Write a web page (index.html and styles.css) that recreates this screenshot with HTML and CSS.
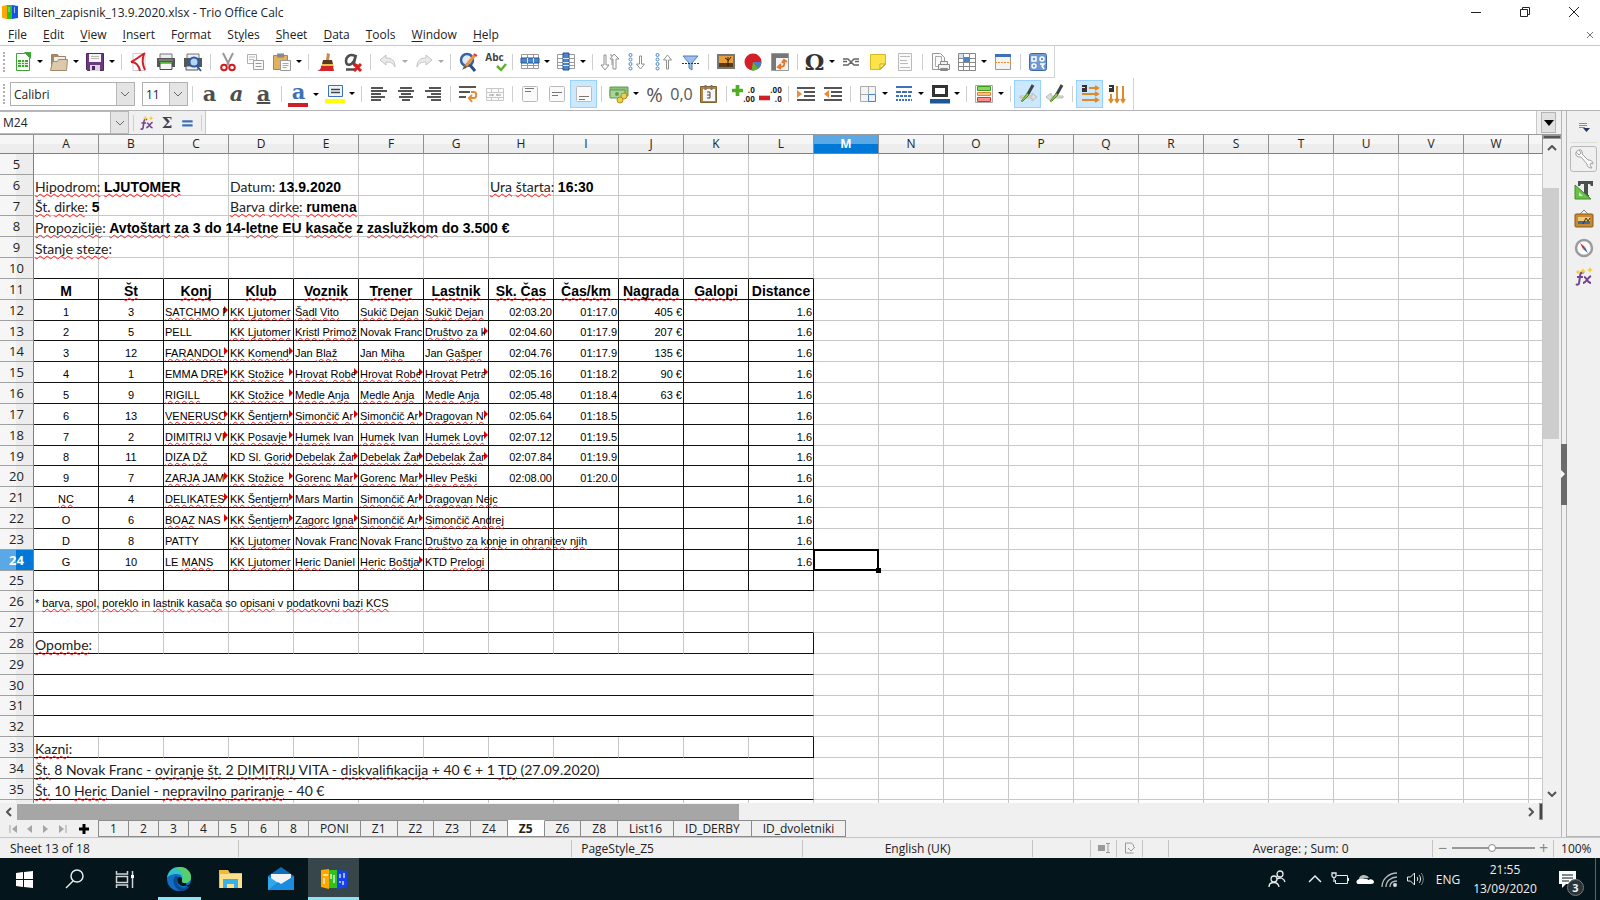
FILE: index.html
```html
<!DOCTYPE html>
<html lang="en">
<head>
    <meta charset="UTF-8">
    <meta name="viewport" content="width=device-width, initial-scale=1.0">
    <title>Bilten_zapisnik_13.9.2020.xlsx - Trio Office Calc</title>
    <link rel="stylesheet" href="styles.css">
</head>
<body>

    <header class="titlebar">
        <svg class="app-icon" viewBox="0 0 16 16"><path fill="#ffa800" d="M0 2l5-1v14l-5-1z"/><path fill="#2fc21c" d="M5 1h5v14H5z"/><path fill="#1454e8" d="M10 1l6 1v12l-6 1z"/><path stroke="#fff" stroke-opacity=".6" d="M7 3v5M12.500 3v6"/></svg>
        <h1>Bilten_zapisnik_13.9.2020.xlsx - Trio Office Calc</h1>
        <div class="window-buttons">
            <button aria-label="Minimize"><svg viewBox="0 0 12 12"><path d="M1 6.500h10"/></svg></button>
            <button aria-label="Restore"><svg viewBox="0 0 12 12"><path d="M1.500 3.500h7v7h-7zM3.500 3.500v-2h7v7h-2"/></svg></button>
            <button aria-label="Close"><svg viewBox="0 0 12 12"><path d="M1 1l10 10M11 1L1 11"/></svg></button>
        </div>
    </header>

    <nav class="menubar">
        <button><u>F</u>ile</button>
        <button><u>E</u>dit</button>
        <button><u>V</u>iew</button>
        <button><u>I</u>nsert</button>
        <button>F<u>o</u>rmat</button>
        <button>St<u>y</u>les</button>
        <button><u>S</u>heet</button>
        <button><u>D</u>ata</button>
        <button><u>T</u>ools</button>
        <button><u>W</u>indow</button>
        <button><u>H</u>elp</button>
        <button class="close-doc" aria-label="Close document"><svg viewBox="0 0 8 8"><path d="M1 1l6 6M7 1L1 7"/></svg></button>
    </nav>

    <!-- Standard toolbar -->
    <div class="toolbar toolbar-standard" role="toolbar" aria-label="Standard">
        <span class="grip"></span>
        <button class="tool drop" aria-label="New"><svg viewBox="0 0 20 20"><path d="M3.500 1.500h9l4 4v13h-13z" fill="#fff" stroke="#3fa535"/><path d="M11 0h7v7z" fill="#3fa535"/><path d="M5 8h10v7H5z" fill="#3fa535"/><path d="M5 10.500h10M5 12.500h10M8.500 8v7M11.500 8v7" stroke="#d8f0d4"/></svg></button>
        <button class="tool drop" aria-label="Open"><svg viewBox="0 0 20 20"><path d="M2.500 17.500v-15h6l1 2h7v5" fill="#a58a68" stroke="#9c8262"/><path d="M5 5h11v6H5z" fill="#eee"/><path d="M1.500 18.500l2-9h5l1-2h9l-1 11z" fill="#dcc9aa" stroke="#a48a68"/></svg></button>
        <button class="tool drop" aria-label="Save"><svg viewBox="0 0 20 20"><path d="M1.500 1.500h17v17h-16l-1-1z" fill="#6c3a80" stroke="#4e2660"/><path d="M4 2h12v8H4z" fill="#f4f4f4"/><path d="M6 4.500h8M6 6.500h8" stroke="#bbb"/><path d="M5 13h10v6H5z" fill="#d8d8d8"/><path d="M7 14h3v4H7z" fill="#4e2660"/></svg></button>
        <span class="sep"></span>
        <button class="tool" aria-label="Export as PDF"><svg viewBox="0 0 20 20"><path d="M4 1.500h12v17H4z" fill="#fff" stroke="#ccc"/><path d="M16 1C11 4 6 8 2 10M2 10c5 0 8 4 9 9M15 2c-2 5-2 10 1 16" fill="none" stroke="#d51f26" stroke-width="2"/></svg></button>
        <button class="tool" aria-label="Print"><svg viewBox="0 0 20 20"><path d="M4 2h12v5H4z" fill="#eee" stroke="#777"/><path d="M1 6h18v9H1z" fill="#55585a"/><path d="M3 8h14" stroke="#9a9a9a"/><path d="M4 11h12v6.500H4z" fill="#f6f6f6" stroke="#4a4a4a"/><path d="M4 10.500h12" stroke="#57b03c"/></svg></button>
        <button class="tool" aria-label="Print preview"><svg viewBox="0 0 20 20"><path d="M4 2h12v5H4z" fill="#eee" stroke="#777"/><path d="M1 6h18v9H1z" fill="#55585a"/><path d="M3 14h12v4H3z" fill="#eee" stroke="#555"/><circle cx="11" cy="10" r="4.500" fill="#b9d3f2" stroke="#2a5ba5" stroke-width="2"/><path d="M14 14l4 5" stroke="#2a5ba5" stroke-width="2"/></svg></button>
        <span class="sep"></span>
        <button class="tool" aria-label="Cut"><svg viewBox="0 0 20 20"><path d="M5 1l6 12M15 1L9 13" stroke="#999" stroke-width="2"/><circle cx="6" cy="15.500" r="2.800" fill="none" stroke="#d41c1c" stroke-width="2"/><circle cx="14" cy="15.500" r="2.800" fill="none" stroke="#d41c1c" stroke-width="2"/></svg></button>
        <button class="tool" aria-label="Copy"><svg viewBox="0 0 20 20"><path d="M2.500 2.500h9v9h-9z" fill="#fafafa" stroke="#b0b0b0"/><path d="M4 5h6M4 7.500h5" stroke="#bbb"/><path d="M8.500 8.500h10v9h-10z" fill="#fafafa" stroke="#a0a0a0"/><path d="M10.500 11.500h6M10.500 14.500h6" stroke="#999"/></svg></button>
        <button class="tool drop" aria-label="Paste"><svg viewBox="0 0 20 20"><path d="M1.500 3.500h14v14h-14z" fill="#e2b060" stroke="#b98433"/><path d="M5 1.500h7v4H5z" fill="#888"/><path d="M8.500 8.500h10v10h-10z" fill="#fafafa" stroke="#999"/><path d="M10.500 11.500h6M10.500 13.500h6M10.500 15.500h4" stroke="#aaa"/></svg></button>
        <span class="sep"></span>
        <button class="tool" aria-label="Clone formatting"><svg viewBox="0 0 20 20"><path d="M11 1l3 1-1 6h-3z" fill="#c98a45"/><path d="M7 8h9l1 4H6z" fill="#5b3a20"/><path d="M6 12h11l1 3H5z" fill="#e9c24e"/><path d="M5 14h12l1 5H1c3-1 4-2 4-5z" fill="#d2252b"/></svg></button>
        <button class="tool" aria-label="Clear formatting"><svg viewBox="0 0 20 20"><path d="M12 4c-5-3-9 1-9 5 0 5 5 5 8 0l2-6-2 8c0 3 2 3 3 1M3 17.500h9" fill="none" stroke="#4c4f50" stroke-width="2.500"/><path d="M11 12l7 7M18 12l-7 7" stroke="#e01b1b" stroke-width="3"/></svg></button>
        <span class="sep"></span>
        <button class="tool drop faded" aria-label="Undo"><svg viewBox="0 0 20 20"><path d="M2 8l6-5v3c6 0 9 3 9 9-2-4-4-5-9-5v3z" fill="#eaeaea" stroke="#c4c4c4"/></svg></button>
        <button class="tool drop faded" aria-label="Redo"><svg viewBox="0 0 20 20"><path d="M18 8l-6-5v3c-6 0-9 3-9 9 2-4 4-5 9-5v3z" fill="#eaeaea" stroke="#c4c4c4"/></svg></button>
        <span class="sep"></span>
        <button class="tool" aria-label="Find and replace"><svg viewBox="0 0 20 20"><circle cx="9" cy="8" r="6" fill="#dfeaf8" stroke="#3465a4" stroke-width="2.500"/><path d="M12 13l5 6" stroke="#2b4f87" stroke-width="3"/><path d="M17 3L6 16" stroke="#f0913a" stroke-width="3"/><path d="M7 13l-3 5 5-3z" fill="#554"/><path d="M16 2l3 2" stroke="#d33" stroke-width="2"/></svg></button>
        <button class="tool spell" aria-label="Spelling"><span>Abc</span><svg viewBox="0 0 14 10"><path d="M3 4l4 4 5-6" fill="none" stroke="#62b22f" stroke-width="2.500"/></svg></button>
        <span class="sep"></span>
        <button class="tool drop" aria-label="Row"><svg viewBox="0 0 20 20"><path d="M1.500 2.500h17v14h-17zM1 13.500h18M7.500 2v15M13.500 2v15" fill="#fff" stroke="#999"/><path d="M1 6h18v5H1z" fill="#4a86cf" stroke="#23528c"/><path d="M7.500 6v5M13.500 6v5" stroke="#d7e6f8"/></svg></button>
        <button class="tool drop" aria-label="Column"><svg viewBox="0 0 20 20"><path d="M1.500 2.500h17v14h-17zM1 6.500h18M1 10.500h18M1 13.500h18" fill="#fff" stroke="#999"/><path d="M7 1h6v17H7z" fill="#4a86cf" stroke="#23528c"/><path d="M7 6.500h6M7 10.500h6M7 13.500h6" stroke="#d7e6f8"/></svg></button>
        <span class="sep"></span>
        <button class="tool" aria-label="Sort"><svg viewBox="0 0 20 20" fill="#fff" stroke="#909090"><path d="M4 3h2v10h3l-4 5-4-5h3zM10 3h2v10"/><path d="M13 17V7h-3l4-5 5 5h-3v10z"/></svg></button>
        <button class="tool" aria-label="Sort ascending"><svg viewBox="0 0 20 20" fill="#fff"><g stroke="#4a82c8"><circle cx="3.500" cy="3" r="1.500"/><circle cx="3.500" cy="7.500" r="1.500"/><circle cx="3.500" cy="12" r="1.500"/><circle cx="3.500" cy="16.500" r="1.500"/></g><path d="M12.500 4h2v8h3l-4 5-4-5h3z" stroke="#909090"/></svg></button>
        <button class="tool" aria-label="Sort descending"><svg viewBox="0 0 20 20" fill="#fff"><g stroke="#4a82c8"><circle cx="3.500" cy="3" r="1.500"/><circle cx="3.500" cy="7.500" r="1.500"/><circle cx="3.500" cy="12" r="1.500"/><circle cx="3.500" cy="16.500" r="1.500"/></g><path d="M12.500 17h2V8h3l-4-5-4 5h3z" stroke="#909090"/></svg></button>
        <button class="tool" aria-label="AutoFilter"><svg viewBox="0 0 20 20"><path d="M2 4h15l-6 7v7l-3-2v-5z" fill="#9dbfe8" stroke="#4d7fb8"/><path d="M1 11.500h18" stroke="#333" stroke-dasharray="2 1"/></svg></button>
        <span class="sep"></span>
        <button class="tool" aria-label="Insert image"><svg viewBox="0 0 20 20"><path d="M1 2h18v15H1z" fill="#777"/><path d="M3 4h14v11H3z" fill="#e8a03a"/><path d="M3 11h14v4H3z" fill="#5b3a14"/><path d="M12 14V8l-3-2M12 9l3-4M12 8V5" stroke="#2c1a06" fill="none"/></svg></button>
        <button class="tool" aria-label="Insert chart"><svg viewBox="0 0 20 20"><circle cx="10" cy="10" r="8.500" fill="#d41f26"/><path d="M10 10h8.500a8.500 8.500 0 0 1-3 6.500z" fill="#4d7fc4"/><path d="M10 10l5.500 6.500a8.500 8.500 0 0 1-7 2z" fill="#5db335"/></svg></button>
        <button class="tool" aria-label="Pivot table"><svg viewBox="0 0 20 20"><path d="M1.500 1.500h17v17h-17z" fill="#f4f4f4" stroke="#999"/><path d="M2 2h4v16H2zM2 2h16v4H2z" fill="#777"/><path d="M9 15c5 0 6-1 5-6m-2 2l2-3 3 2M11 12l-3 3 3 2" fill="none" stroke="#e8762d" stroke-width="2"/></svg></button>
        <span class="sep"></span>
        <button class="tool drop omega" aria-label="Special character">Ω</button>
        <button class="tool" aria-label="Insert hyperlink"><svg viewBox="0 0 20 20" fill="none" stroke="#666" stroke-width="1.500"><path d="M2 7h5l3 3 3-3h5M2 13h5l3-3 3 3h5M2 9.500h4M14 9.500h4"/></svg></button>
        <button class="tool" aria-label="Insert comment"><svg viewBox="0 0 20 20"><path d="M2.500 2.500h15v10l-5 5h-10z" fill="#fbe34b" stroke="#d8b91f"/><path d="M17 12l-5 5v-5z" fill="#fff3a0" stroke="#c9a910"/></svg></button>
        <button class="tool faded" aria-label="Headers and footers"><svg viewBox="0 0 20 20"><path d="M3.500 1.500h13v17h-13z" fill="#fafafa" stroke="#bbb"/><path d="M5 4.500h10M5 8.500h7M5 11.500h8M5 15.500h10" stroke="#bbb"/></svg></button>
        <span class="sep"></span>
        <button class="tool" aria-label="Define print area"><svg viewBox="0 0 20 20"><path d="M2.500 1.500h8l4 4v12h-12z" fill="#fafafa" stroke="#999"/><path d="M5.500 4.500h6v10h-6z" fill="none" stroke="#aaa"/><path d="M8.500 12.500h11v5h-11zM10.500 9.500h7v3h-7zM10.500 16.500h7v2h-7z" fill="#f2f2f2" stroke="#888"/></svg></button>
        <button class="tool drop" aria-label="Freeze rows and columns"><svg viewBox="0 0 20 20"><path d="M1.500 1.500h17v17h-17z" fill="#fff" stroke="#888"/><path d="M6.500 2v16M12.500 2v16M2 6.500h16M2 10.500h16M2 14.500h16" stroke="#888"/><path d="M7 5h6v5H7z" fill="#4d82c8"/><path d="M2 2h4v4H2z" fill="#d5e4f5"/></svg></button>
        <button class="tool" aria-label="Split window"><svg viewBox="0 0 20 20"><path d="M2.500 2.500h15v15h-15z" fill="#f3f3f3" stroke="#999"/><path d="M2 2h16v3H2z" fill="#3e70b5"/><path d="M2 10.500h16" stroke="#f08a28" stroke-dasharray="2 1"/></svg></button>
        <span class="sep"></span>
        <button class="tool" aria-label="Show draw functions"><svg viewBox="0 0 20 20"><rect x="1.500" y="1.500" width="17" height="17" rx="2" fill="#7298d0" stroke="#3d68a8"/><g fill="none" stroke="#fff" stroke-width="1.500"><path d="M4 5h4v4H4z"/><circle cx="14" cy="7" r="2"/><circle cx="6" cy="14" r="2"/><path d="M12 12h4l-2 2 2 3"/></g></svg></button>
    </div>

    <!-- Formatting toolbar -->
    <div class="toolbar toolbar-format" role="toolbar" aria-label="Formatting">
        <span class="grip"></span>
        <select class="font-name" aria-label="Font name"><option>Calibri</option></select>
        <select class="font-size" aria-label="Font size"><option>11</option></select>
        <span class="sep"></span>
        <button class="tool letter" aria-label="Bold">a</button>
        <button class="tool letter slanted" aria-label="Italic">a</button>
        <button class="tool letter lined" aria-label="Underline">a</button>
        <span class="sep"></span>
        <button class="tool drop letter font-color" aria-label="Font color">a</button>
        <button class="tool drop" aria-label="Highlighting color"><svg viewBox="0 0 20 20"><path d="M3.500 1.500h14v11h-14z" fill="#eef4fb" stroke="#3e70b5"/><path d="M6 5.500h9M6 8.500h9" stroke="#444" stroke-width="1.500"/><path d="M0 15h20v4.500H0z" fill="#ffff00"/></svg></button>
        <span class="sep"></span>
        <button class="tool" aria-label="Align left"><svg viewBox="0 0 20 20" stroke="#555" stroke-width="2"><path d="M2 4h12M2 7h16M2 10h10M2 13h14M2 16h10"/></svg></button>
        <button class="tool" aria-label="Align center"><svg viewBox="0 0 20 20" stroke="#555" stroke-width="2"><path d="M4 4h12M2 7h16M5 10h10M3 13h14M6 16h8"/></svg></button>
        <button class="tool" aria-label="Align right"><svg viewBox="0 0 20 20" stroke="#555" stroke-width="2"><path d="M6 4h12M2 7h16M8 10h10M4 13h14M8 16h10"/></svg></button>
        <span class="sep"></span>
        <button class="tool" aria-label="Wrap text"><svg viewBox="0 0 20 20" fill="none" stroke="#555" stroke-width="2"><path d="M1 3h17M1 8h11M1 13h7"/><path d="M13 8h3c3 0 3 6 0 6h-5m3-3l-3 3 3 4" stroke="#e88a35"/></svg></button>
        <button class="tool faded" aria-label="Merge cells"><svg viewBox="0 0 20 20"><path d="M1.500 4.500h17v12h-17zM1.500 8.500h17M1.500 13.500h17M6.500 4v4M13.500 4v4M6.500 14v3M13.500 14v3" fill="#fafafa" stroke="#c8c8c8"/><path d="M4 11h4m0-1v2M16 11h-4m0-1v2" stroke="#999"/></svg></button>
        <span class="sep"></span>
        <button class="tool" aria-label="Align top"><svg viewBox="0 0 20 20"><rect x="2.500" y="2.500" width="15" height="15" rx="1" fill="#fafafa" stroke="#bbb"/><path d="M5 4.500h9M5 7.500h6" stroke="#777"/></svg></button>
        <button class="tool" aria-label="Center vertically"><svg viewBox="0 0 20 20"><rect x="2.500" y="2.500" width="15" height="15" rx="1" fill="#fafafa" stroke="#bbb"/><path d="M5 8.500h10M5 11.500h6" stroke="#777"/></svg></button>
        <button class="tool active" aria-label="Align bottom"><svg viewBox="0 0 20 20"><rect x="2.500" y="2.500" width="15" height="15" rx="1" fill="#fafafa" stroke="#bbb"/><path d="M5 12.500h10M5 15.500h6" stroke="#777"/></svg></button>
        <span class="sep"></span>
        <button class="tool drop" aria-label="Currency"><svg viewBox="0 0 20 20"><path d="M1 3h18v9H1z" fill="#8cc07a" stroke="#5f9a4c"/><path d="M1 6h15v8H1z" fill="#a9d398" stroke="#5f9a4c"/><circle cx="8" cy="10" r="2" fill="#5f9a4c"/><circle cx="15" cy="12" r="3" fill="#f0cf4a" stroke="#b88d1e"/><circle cx="11" cy="16" r="3" fill="#f0cf4a" stroke="#b88d1e"/></svg></button>
        <button class="tool symbol percent" aria-label="Percent">%</button>
        <button class="tool symbol" aria-label="Number">0,0</button>
        <button class="tool" aria-label="Date"><svg viewBox="0 0 20 20"><path d="M1.500 2.500h16v16h-16z" fill="#b08548" stroke="#80602c"/><path d="M4 5h12v12H4z" fill="#f8f8f8"/><path d="M6.500 1v5M12.500 1v5" stroke="#777" stroke-width="2"/><path d="M8 8h3v6H8m0-3h3" fill="none" stroke="#444"/></svg></button>
        <span class="sep"></span>
        <button class="tool decimals" aria-label="Add decimal place"><svg viewBox="0 0 12 12"><path d="M4 0h4v4h4v4H8v4H4V8H0V4h4z" fill="#4fae22"/></svg><span>.0<br>.00</span></button>
        <button class="tool decimals less" aria-label="Delete decimal place"><svg viewBox="0 0 12 12"><path d="M0 4h12v5H0z" fill="#cf2027"/></svg><span>.00<br>.0</span></button>
        <span class="sep"></span>
        <button class="tool" aria-label="Increase indent"><svg viewBox="0 0 20 20"><path d="M1 4h18M8 8h11M8 12h11M1 16h18" stroke="#555" stroke-width="2"/><path d="M1 6l5 4-5 4z" fill="#f08a38"/></svg></button>
        <button class="tool" aria-label="Decrease indent"><svg viewBox="0 0 20 20"><path d="M1 4h18M8 8h11M8 12h11M1 16h18" stroke="#555" stroke-width="2"/><path d="M6 6l-5 4 5 4z" fill="#f08a38"/></svg></button>
        <span class="sep"></span>
        <button class="tool drop" aria-label="Borders"><svg viewBox="0 0 20 20"><path d="M2.500 2.500h15v15h-15z" fill="#f4f4f4" stroke="#aaa"/><path d="M10.500 2v8M2 10.500h8" stroke="#aaa"/><path d="M10.500 10.500h7v7h-7z" fill="#eef4fb" stroke="#4d82c8"/></svg></button>
        <button class="tool drop" aria-label="Border style"><svg viewBox="0 0 20 20" stroke="#3e70b5" stroke-width="2"><path d="M2 3h16"/><path d="M2 8h16" stroke-dasharray="5 1"/><path d="M2 12h16" stroke-dasharray="3 1"/><path d="M2 16h16" stroke-dasharray="2 1"/></svg></button>
        <button class="tool drop" aria-label="Border color"><svg viewBox="0 0 20 20"><path d="M3.500 2.500h13v9h-13z" fill="#fff" stroke="#333" stroke-width="3"/><path d="M0 15h20v4.500H0z" fill="#1f5796"/></svg></button>
        <span class="sep"></span>
        <button class="tool drop" aria-label="Conditional formatting"><svg viewBox="0 0 20 20"><path d="M1.500 1.500h17v17h-17z" fill="#fafafa" stroke="#aaa"/><path d="M3.500 2.500h13v4h-13z" fill="#8bd36a" stroke="#3f9a20"/><path d="M3.500 8.500h13v3h-13z" fill="#ffc38a" stroke="#e8862d"/><path d="M3.500 13.500h13v4h-13z" fill="#ff8b8b" stroke="#d33"/></svg></button>
        <span class="sep"></span>
        <button class="tool active" aria-label="Left-to-right pen"><svg viewBox="0 0 20 20"><path d="M2 12h12V9l5 4-5 4v-3H2z" fill="#ddd" stroke="#bbb"/><path d="M15 1l-5 9" stroke="#3f4446" stroke-width="3"/><path d="M9 9l2 2-6 6c-1 1-2 0-2 0s4-4 6-8z" fill="#8fc843" stroke="#4d8a20"/></svg></button>
        <button class="tool" aria-label="Right-to-left pen"><svg viewBox="0 0 20 20"><path d="M18 12H6V9l-5 4 5 4v-3h12z" fill="#ddd" stroke="#bbb"/><path d="M17 1l-5 9" stroke="#3f4446" stroke-width="3"/><path d="M11 9l2 2-6 6c-1 1-2 0-2 0s4-4 6-8z" fill="#8fc843" stroke="#4d8a20"/></svg></button>
        <span class="sep"></span>
        <button class="tool active" aria-label="Text direction left to right"><svg viewBox="0 0 20 20" fill="none" stroke="#e08a28" stroke-width="2"><path d="M9 4h9M2 10h16M2 16h16M15 2l3 2-3 2M15 8l3 2-3 2M15 14l3 2-3 2"/><path d="M2 2h4v5H3V5h3" stroke="#333"/></svg></button>
        <button class="tool" aria-label="Text direction top to bottom"><svg viewBox="0 0 20 20" fill="none" stroke="#e08a28" stroke-width="2"><path d="M4 10v8M10 2v16M16 2v16M2 15l2 3 2-3M8 15l2 3 2-3M14 15l2 3 2-3"/><path d="M2 2h4v5H3V5h3" stroke="#333"/></svg></button>
    </div>

    <main class="workspace">
        <section class="document">
            <div class="formula-bar">
                <div class="name-box">
                    <input type="text" aria-label="Name box" value="M24">
                    <button aria-label="Cell names"><svg viewBox="0 0 10 6"><path d="M1 1l4 4 4-4"/></svg></button>
                </div>
                <span class="sep"></span>
                <button class="fn" aria-label="Function wizard"><svg viewBox="0 0 20 20"><path d="M10 6c-3-2-4 1-4 4l-1 6c0 2-2 2-3 1M3 10h6M10 10c3 0 3 6 7 6M17 9c-3 1-5 7-8 7" fill="none" stroke="#75458c" stroke-width="2"/><path d="M8 1l1 2 2 1-2 1-1 2-1-2-2-1 2-1zM15 1l1 2 2 1-2 1-1 2-1-2-2-1 2-1z" fill="#f3cf35"/></svg></button>
                <button class="fn sum" aria-label="Sum">Σ</button>
                <button class="fn" aria-label="Formula"><svg viewBox="0 0 20 20"><path d="M4 8h13M4 13h13" stroke="#3e70b5" stroke-width="3"/></svg></button>
                <span class="sep"></span>
                <input type="text" class="formula" aria-label="Formula">
                <button class="expand" aria-label="Expand formula bar"><svg viewBox="0 0 10 6"><path d="M0 0h10L5 6z"/></svg></button>
            </div>

            <div class="sheet-area">
                <div class="sheet">
                    <table>
                        <colgroup id="cols"></colgroup>
                        <thead id="head"></thead>
                        <tbody id="body"></tbody>
                    </table>
                </div>
                <div class="vscroll">
                    <span class="split-handle"></span>
                    <button aria-label="Scroll up"><svg viewBox="0 0 10 6"><path d="M1 5l4-4 4 4"/></svg></button>
                    <div class="track"><div class="thumb"></div></div>
                    <button aria-label="Scroll down"><svg viewBox="0 0 10 6"><path d="M1 1l4 4 4-4"/></svg></button>
                </div>
            </div>

            <div class="hscroll">
                <button aria-label="Scroll left"><svg viewBox="0 0 6 10"><path d="M5 1L1 5l4 4"/></svg></button>
                <div class="track"><div class="thumb"></div></div>
                <button aria-label="Scroll right"><svg viewBox="0 0 6 10"><path d="M1 1l4 4-4 4"/></svg></button>
                <span class="split-handle"></span>
            </div>

            <div class="tabs">
                <button class="nav" aria-label="First sheet"><svg viewBox="0 0 10 10"><path d="M1 1v8" stroke="#a5a5a5"/><path d="M8 1v8L3 5z"/></svg></button>
                <button class="nav" aria-label="Previous sheet"><svg viewBox="0 0 10 10"><path d="M7 1v8L2 5z"/></svg></button>
                <button class="nav" aria-label="Next sheet"><svg viewBox="0 0 10 10"><path d="M2 1v8l5-4z"/></svg></button>
                <button class="nav" aria-label="Last sheet"><svg viewBox="0 0 10 10"><path d="M9 1v8" stroke="#a5a5a5"/><path d="M2 1v8l5-4z"/></svg></button>
                <button class="nav add" aria-label="Add sheet"><svg viewBox="0 0 10 10"><path d="M3.500 0h3v3.500H10v3H6.500V10h-3V6.500H0v-3h3.500z"/></svg></button>
                <button class="tab">1</button>
                <button class="tab">2</button>
                <button class="tab">3</button>
                <button class="tab">4</button>
                <button class="tab">5</button>
                <button class="tab">6</button>
                <button class="tab">8</button>
                <button class="tab">PONI</button>
                <button class="tab">Z1</button>
                <button class="tab">Z2</button>
                <button class="tab">Z3</button>
                <button class="tab">Z4</button>
                <button class="tab current">Z5</button>
                <button class="tab">Z6</button>
                <button class="tab">Z8</button>
                <button class="tab">List16</button>
                <button class="tab">ID_DERBY</button>
                <button class="tab">ID_dvoletniki</button>
            </div>
        </section>

        <button class="splitter" aria-label="Hide sidebar"><span><svg viewBox="0 0 4 8"><path d="M0 0l4 4-4 4z"/></svg></span></button>

        <aside class="sidebar">
            <button class="settings" aria-label="Sidebar settings"><svg viewBox="0 0 12 12"><path d="M1 2.500h8M1 4.500h8M1 6.500h6" stroke="#7f8fb0"/><path d="M5 7h7l-3.500 4z" fill="#25355c"/></svg></button>
            <button class="deck selected" aria-label="Properties"><svg viewBox="0 0 20 20"><path d="M7 1c-3-1-6 2-5 5 1 2 3 2 5 2l6 7c0 3 2 4 5 4l-2-3 1-2 2 1c0-3-2-4-5-4L8 5c1-1 0-3-1-4zM2 3l3 3 2-2-2-3" fill="#fafafa" stroke="#a0a0a0"/></svg></button>
            <button class="deck" aria-label="Styles"><svg viewBox="0 0 20 20"><path d="M4 1h15v5h-2l-1-2h-2v11h1v2H9v-2h1V4H7L6 6H4z" fill="#4c4f50"/><path d="M1 5v14h16z" fill="#6cc04a" stroke="#3f8f24"/><path d="M5 12v4h4z" fill="#c9eabb"/></svg></button>
            <button class="deck" aria-label="Gallery"><svg viewBox="0 0 20 20"><path d="M6 5l4-4 4 4" fill="none" stroke="#888"/><rect x="1" y="5" width="18" height="13" rx="1" fill="#c68a35" stroke="#8b5a18"/><path d="M4 8h12v7H4z" fill="#f3c878"/><path d="M4 12h12v3H4z" fill="#3f6d94"/><path d="M9 15l3-6 2 3 2-3" fill="none" stroke="#4a2f0d"/></svg></button>
            <button class="deck" aria-label="Navigator"><svg viewBox="0 0 20 20"><circle cx="10" cy="10" r="8" fill="#fdfdfd" stroke="#9b9b9b" stroke-width="2.500"/><path d="M6 5l5 4-2 2z" fill="#d9262c"/><path d="M14 15l-5-4 2-2z" fill="#3b66a8"/></svg></button>
            <button class="deck" aria-label="Functions"><svg viewBox="0 0 20 20"><path d="M10 6c-3-2-4 1-4 4l-1 6c0 2-2 2-3 1M3 10h6M10 10c3 0 3 6 7 6M17 9c-3 1-5 7-8 7" fill="none" stroke="#75458c" stroke-width="2"/><path d="M9 1l1 2 2 1-2 1-1 2-1-2-2-1 2-1zM16 0l1 2 2 1-2 1-1 2-1-2-2-1 2-1zM4 3l1 1 1 1-1 1-1 1-1-1-1-1 1-1z" fill="#f3cf35"/></svg></button>
        </aside>
    </main>

    <div class="statusbar">
        <span class="st-sheet">Sheet 13 of 18</span>
        <span class="st-page"></span>
        <span class="st-style">PageStyle_Z5</span>
        <span class="st-lang">English (UK)</span>
        <span class="st-blank"></span>
        <span class="st-icon"><svg viewBox="0 0 12 12"><path d="M0 3h7v6H0z" fill="#999"/><path d="M8 1.500h4M10 1v10M8 10.500h4" stroke="#999" fill="none"/></svg></span>
        <span class="st-icon"><svg viewBox="0 0 12 12"><path d="M9.500 5V3l-2-2h-6v10h8M4 6l3 3 4-4" stroke="#999" fill="none"/></svg></span>
        <span class="st-icon"></span>
        <span class="st-sum">Average: ; Sum: 0</span>
        <span class="st-zoom">
            <button aria-label="Zoom out">−</button>
            <input type="range" aria-label="Zoom" min="0" max="200" value="97">
            <button aria-label="Zoom in">+</button>
        </span>
        <span class="st-percent">100%</span>
    </div>

    <footer class="taskbar">
        <button class="app" aria-label="Start"><svg viewBox="0 0 26 26"><path fill="#fff" d="M4 7l7-1v7H4zM12 6l9-1v8h-9zM4 14h7v7l-7-1zM12 14h9v8l-9-1z"/></svg></button>
        <button class="app" aria-label="Search"><svg viewBox="0 0 26 26"><circle cx="15" cy="10" r="6" fill="none" stroke="#e8ecee" stroke-width="1.500"/><path d="M11 15l-7 7" stroke="#e8ecee" stroke-width="1.500"/></svg></button>
        <button class="app" aria-label="Task view"><svg viewBox="0 0 26 26"><path d="M4.500 5v3h11V5M4.500 22v-3h11v3M4.500 10.500h11v6h-11zM20.500 5v17" fill="none" stroke="#cfd5d8" stroke-width="1.500"/><path d="M19 9h3v3h-3z" fill="#fff"/></svg></button>
        <button class="app running" aria-label="Microsoft Edge"><svg viewBox="0 0 26 26"><circle cx="13" cy="13" r="12" fill="#0f6fc5"/><path d="M1 12C2 4 8 1 13 1c7 0 12 5 12 10 0 4-3 6-6 6-3 0-4-1-3-3 1-3-1-6-5-6-5 0-9 2-10 4z" fill="#36c1c8"/><path d="M14 1c7 0 11 5 11 10 0 4-3 6-6 6-2 0-4-1-3-3 3-5-1-10-6-12z" fill="#57cf6b"/><path d="M8 12c-2 6 2 12 8 13 3 0 6-2 8-5-7 3-13 1-13-5 0-2 1-3 2-4-2-1-4-1-5 1z" fill="#0a4a94"/><path d="M13 11c-3 2-2 8 4 9 3 0 5-1 7-2l-1 3c-2 0-3-1-3-4-3 1-5-1-4-3 0-2-1-3-3-3z" fill="#04151b"/></svg></button>
        <button class="app" aria-label="File Explorer"><svg viewBox="0 0 26 26"><path d="M1 4h9l2 3h12v15H1z" fill="#f0b93a"/><path d="M2 8h22v14H2z" fill="#fde08a"/><path d="M5 22v-9h15v9h-4v-4H9v4z" fill="#38b0e8"/></svg></button>
        <button class="app" aria-label="Mail"><svg viewBox="0 0 26 26"><path d="M0 10l13-9 13 9v14H0z" fill="#0f6cbf"/><path d="M3 8h20v10H3z" fill="#f2f2f2"/><path d="M0 10l13 9 13-9v14H0z" fill="#2ea7ec"/><path d="M0 24l10-8 3 2 13-8v14z" fill="#1b8de0"/></svg></button>
        <button class="app running focused" aria-label="Trio Office"><svg viewBox="0 0 26 26"><path fill="#ffa800" d="M0 4l8-1v20l-8-2z"/><path fill="#2fc21c" d="M8 4h8v18H8z"/><path fill="#1643f0" d="M16 4l10 1v16l-10 2z"/><path stroke="#fff" fill="none" stroke-opacity=".8" stroke-width="1.500" d="M2 9h5M3 12v6M10 8v5M13 9v8M19 8v4M23 7v5M18 16h2M22 15v4"/></svg></button>
        <div class="tray">
            <button class="people" aria-label="People"><svg viewBox="0 0 18 18" fill="none" stroke="#e8ecee" stroke-width="1.300"><circle cx="12" cy="4" r="3"/><path d="M9 9c3-2 7-1 8 3"/><circle cx="6" cy="9" r="3"/><path d="M1 17c0-6 9-6 10 0"/></svg></button>
            <button aria-label="Show hidden icons"><svg viewBox="0 0 18 18" fill="none" stroke="#e8ecee" stroke-width="1.500"><path d="M3 12l6-6 6 6"/></svg></button>
            <button aria-label="Battery"><svg viewBox="0 0 18 18" fill="none" stroke="#e8ecee"><path d="M6 5.500h10.500v8h-12V10M17.500 8v3"/><path d="M1 3v3c0 2 4 2 4 0V3zM3 8v4" stroke-width="1.300"/></svg></button>
            <button aria-label="OneDrive"><svg viewBox="0 0 18 18"><path d="M3 9c0-4 7-6 10-1z" fill="#b5babd"/><path d="M3 14c-4 0-3-5 1-5 2-1 6 0 8 2 1-3 6-2 6 1 0 1-1 2-3 2z" fill="#fff"/><path d="M3 9h8l3 2v3H3z" fill="#fff"/></svg></button>
            <button aria-label="Network"><svg viewBox="0 0 18 18" fill="none" stroke="#b5babd" stroke-width="1.300"><path d="M1 17C1 9 8 3 16 3M5 17c0-6 5-10 11-10M9 17c0-4 3-6 7-6"/><circle cx="14" cy="15" r="1.500" fill="#fff"/></svg></button>
            <button aria-label="Volume"><svg viewBox="0 0 18 18" fill="none" stroke="#e8ecee"><path d="M1.500 7v4h3l4 4V3l-4 4z"/><path d="M11 7c1 1 1 3 0 4M13 5c2 2 2 6 0 8"/><path d="M15 3c3 3 3 9 0 12" stroke="#7d878b"/></svg></button>
            <button class="lang">ENG</button>
            <button class="clock">21:55<br>13/09/2020</button>
            <button class="notify" aria-label="Notifications"><svg viewBox="0 0 18 18"><path d="M0 1h17v13H7l-4 4v-4H0z" fill="#fff"/><path d="M3 5h11M3 8h11M3 11h7" stroke="#04151b"/></svg><span class="badge">3</span></button>
        </div>
    </footer>

    <script src="script.js"></script>
</body>
</html>
```
FILE: styles.css
```css
* {
    box-sizing: border-box;
}
body {
    margin: 0;
    height: 100vh;
    display: flex;
    flex-direction: column;
    overflow: hidden;
    font-family: "Open Sans", "Noto Sans", sans-serif;
    font-size: 12px;
    color: #222;
    background-color: #fff;
}
button {
    display: flex;
    align-items: center;
    justify-content: center;
    padding: 0;
    border: none;
    background: none;
    font: inherit;
    color: inherit;
    cursor: pointer;
}
input, select {
    font: inherit;
    color: inherit;
    border-radius: 0;
}

/* Title and menu */
.titlebar {
    display: flex;
    align-items: center;
    height: 24px;
    padding: 0 2px;
}
.app-icon {
    width: 16px;
    height: 16px;
    margin-right: 5px;
}
.titlebar h1 {
    margin: 0;
    font-size: 12px;
    font-weight: 400;
}
.window-buttons {
    display: flex;
    margin-left: auto;
}
.window-buttons button {
    width: 49px;
    height: 24px;
}
.window-buttons svg {
    width: 12px;
    height: 12px;
    fill: none;
    stroke: #222;
}
.menubar {
    display: flex;
    align-items: center;
    height: 22px;
    padding-right: 5px;
    border-bottom: 1px solid #c9c9c9;
}
.menubar button {
    height: 20px;
    padding: 0 8px;
}
.menubar u {
    text-underline-offset: 2px;
}
.menubar .close-doc {
    margin-left: auto;
    padding: 0;
    width: 10px;
}
.close-doc svg {
    width: 8px;
    height: 8px;
    stroke: #777;
}

/* Toolbars */
.toolbar {
    display: flex;
    align-items: center;
    align-self: flex-start;
    padding-right: 3px;
    border-right: 1px solid #d5d5d5;
}
.toolbar-standard {
    height: 32px;
    border-bottom: 1px solid #d5d5d5;
}
.toolbar-format {
    height: 32px;
}
.grip {
    width: 3px;
    height: 20px;
    margin: 0 4px 0 3px;
    border-left: 2px dotted #b0b0b0;
}
.toolbar-standard .grip {
    margin-right: 3px;
}
.sep {
    width: 1px;
    height: 16px;
    margin: 0 3px 0 4px;
    background-color: #cfcfcf;
}
.tool {
    width: 27px;
    height: 28px;
    flex: none;
    position: relative;
}
.tool svg {
    width: 20px;
    height: 20px;
}
.tool.drop {
    width: 36px;
    padding-right: 9px;
}
.tool.drop::after {
    content: "";
    position: absolute;
    right: 2px;
    top: 12px;
    border: 3px solid transparent;
    border-top-color: #000;
    border-bottom: none;
}
.tool.faded.drop::after {
    border-top-color: #aaa;
}
.tool.active {
    background-color: #cce8ff;
    border: 1px solid #99d1ff;
}
.tool.spell {
    flex-direction: column;
    font-size: 10px;
    font-weight: 700;
    line-height: 10px;
    color: #444;
}
.tool.spell svg {
    width: 14px;
    height: 10px;
    align-self: flex-end;
}
.tool.omega {
    font: 700 22px "DejaVu Serif", serif;
    color: #333;
}
.tool.letter {
    font: 700 21px/20px "DejaVu Serif", serif;
    color: #4c4f50;
}
.tool.slanted {
    font-style: italic;
}
.tool.lined {
    text-decoration: underline;
    text-decoration-thickness: 2px;
}
.tool.font-color {
    height: 26px;
    padding-bottom: 5px;
    color: #3e70b5;
}
.tool.font-color::before {
    content: "";
    position: absolute;
    left: 3px;
    bottom: 0;
    width: 20px;
    height: 4px;
    background-color: #cf2027;
}
.tool.symbol {
    font-size: 16px;
    color: #555;
}
.tool.percent {
    font-size: 20px;
}
.tool.decimals {
    font: 700 8px/9px "Open Sans", sans-serif;
    text-align: right;
    align-items: flex-start;
    padding-top: 5px;
}
.tool.decimals svg {
    width: 11px;
    height: 11px;
}
.tool.decimals.less {
    align-items: flex-end;
    padding: 0 0 5px;
}
.toolbar select {
    appearance: none;
    height: 24px;
    padding: 0 3px;
    border: 1px solid #b0b0b0;
    background: linear-gradient(#b8b8b8, #b8b8b8) right 17px top 0 / 1px 100% no-repeat,
        url("data:image/svg+xml,%3Csvg xmlns='http://www.w3.org/2000/svg' width='8' height='5'%3E%3Cpath d='M0 0l4 4 4-4' fill='none' stroke='%23666'/%3E%3C/svg%3E") right 5px center no-repeat,
        linear-gradient(#e4e4e4, #e4e4e4) right / 17px 100% no-repeat,
        #fff;
}
.font-name {
    width: 125px;
}
.toolbar .font-size {
    width: 46px;
    margin-left: 7px;
}

/* Workspace */
.workspace {
    flex: 1;
    min-height: 0;
    display: flex;
    background-color: #f0f0f0;
    border-top: 1px solid #b4b4b8;
}
.document {
    flex: 1;
    min-width: 0;
    display: flex;
    flex-direction: column;
}
.formula-bar {
    display: flex;
    align-items: center;
    height: 24px;
    padding-right: 5px;
    border-bottom: 1px solid #9a9a9e;
}
.name-box {
    display: flex;
    width: 129px;
    height: 23px;
    border: 1px solid #b8b8b8;
    border-left: none;
}
.name-box input {
    width: 110px;
    padding: 0 3px;
    border: none;
}
.name-box button {
    width: 18px;
    border-left: 1px solid #b8b8b8;
    background-color: #e4e4e4;
}
.name-box svg {
    width: 10px;
    height: 6px;
    fill: none;
    stroke: #666;
}
.fn {
    width: 20px;
    height: 20px;
}
.fn svg {
    width: 16px;
    height: 16px;
}
.fn.sum {
    font: 700 15px "DejaVu Serif", serif;
    color: #444;
}
.formula {
    flex: 1;
    height: 23px;
    border: 1px solid #c8c8c8;
    border-width: 0 1px;
}
.expand {
    width: 15px;
    height: 21px;
    margin-left: 4px;
    border: 1px solid #b5b5b5;
    background-color: #e1e1e1;
}
.expand svg {
    width: 10px;
    height: 6px;
}

/* Sheet */
.sheet-area {
    flex: 1;
    min-height: 0;
    display: flex;
}
.sheet {
    flex: 1;
    min-width: 0;
    background-color: #fff;
    overflow: hidden;
}
table {
    width: 100%;
    height: 100%;
    table-layout: fixed;
    border-collapse: separate;
    border-spacing: 0;
}
.col-rows {
    width: 34px;
}
.col-cells {
    width: 65px;
}
thead th {
    height: 19px;
    padding: 0;
    border-right: 1px solid #909090;
    border-bottom: 1px solid #808080;
    background: linear-gradient(#f6f6f6 50%, #ededed 50%);
    font-weight: 400;
    line-height: 18px;
}
thead th.selected {
    background: linear-gradient(#5ba8e6 50%, #0078d7 50%);
    color: #fff;
    font-weight: 700;
}
tbody th {
    padding: 0;
    border-right: 1px solid #808080;
    border-bottom: 1px solid #a0a0a0;
    background: linear-gradient(90deg, #f6f6f6 50%, #ededed 50%);
    font-size: 13px;
    font-weight: 400;
    line-height: 16px;
}
tbody th.selected {
    background: linear-gradient(90deg, #5ba8e6 50%, #0078d7 50%);
    color: #fff;
    font-weight: 700;
}
td {
    padding: 0;
    border-right: 1px solid #c8c8c8;
    border-bottom: 1px solid #c8c8c8;
    vertical-align: bottom;
    font-family: Lato, sans-serif;
    font-size: 14px;
    line-height: 16px;
    white-space: nowrap;
    position: relative;
}
td div {
    padding: 0 1px;
    height: 16px;
    position: relative;
    z-index: 1;
}
td b {
    font-family: "Liberation Sans", Arial, sans-serif;
    color: #000;
}
td u {
    text-decoration: underline wavy #f02020 1px;
    text-decoration-skip-ink: none;
    text-underline-offset: 1px;
}
.ends td {
    height: 3px;
    border-bottom: none;
}
.ends th {
    border-bottom: none;
}
.boxed {
    border-right-color: #111;
}
.ruled {
    border-bottom-color: #111;
}
.title {
    font-family: "Liberation Sans", Arial, sans-serif;
    font-weight: 700;
    text-align: center;
    color: #000;
}
.small {
    font-family: "Liberation Sans", Arial, sans-serif;
    font-size: 11px;
    color: #000;
}
.center {
    text-align: center;
}
.right {
    text-align: right;
}
.clip div {
    margin-right: 3px;
    overflow: hidden;
}
.more::after {
    content: "";
    position: absolute;
    right: 0;
    top: 6px;
    border: 4px solid transparent;
    border-left-color: #e00000;
    border-right: none;
}
.cursor {
    z-index: 2;
}
.cursor::before {
    content: "";
    position: absolute;
    inset: -1px;
    border: 2px solid #000;
}
.cursor::after {
    content: "";
    position: absolute;
    right: -3px;
    bottom: -3px;
    width: 5px;
    height: 5px;
    background-color: #000;
}

/* Scrollbars */
.vscroll {
    width: 18px;
    display: flex;
    flex-direction: column;
}
.vscroll button {
    height: 18px;
}
.vscroll svg {
    width: 10px;
    height: 6px;
}
.vscroll svg, .hscroll svg {
    fill: none;
    stroke: #555;
    stroke-width: 2;
}
.vscroll .split-handle {
    height: 4px;
    border: 1px solid #999;
    background-color: #555;
}
.vscroll .track {
    flex: 1;
    padding-top: 31px;
}
.vscroll .thumb {
    width: 16px;
    height: 42%;
    background-color: #cdcdcd;
}
.hscroll {
    display: flex;
    align-items: center;
    height: 17px;
    padding-right: 18px;
}
.hscroll button {
    width: 17px;
    height: 17px;
}
.hscroll svg {
    width: 6px;
    height: 10px;
}
.hscroll .track {
    flex: 1;
}
.hscroll .thumb {
    width: 48%;
    height: 16px;
    background-color: #a6a6a6;
}
.hscroll .split-handle {
    width: 4px;
    height: 17px;
    border: 1px solid #999;
    background-color: #444;
}

/* Sheet tabs */
.tabs {
    display: flex;
    height: 17px;
    padding-left: 6px;
}
.nav {
    width: 16px;
    fill: #a5a5a5;
}
.nav svg {
    width: 10px;
    height: 10px;
}
.nav.add {
    width: 28px;
    fill: #000;
}
.tab {
    min-width: 30px;
    padding: 0 11px;
    border: 1px solid #8c8c8c;
    border-left: none;
}
.nav + .tab {
    border-left: 1px solid #8c8c8c;
}
.tab.current {
    background-color: #fff;
    border-top-color: #fff;
    font-weight: 700;
}

/* Sidebar */
.splitter {
    width: 6px;
    border: 1px solid #b5b5b5;
    border-width: 0 1px;
    background-color: #f0f0f0;
}
.splitter span {
    display: flex;
    align-items: center;
    height: 61px;
    width: 6px;
    flex: none;
    background-color: #6b6b6b;
}
.splitter svg {
    width: 4px;
    height: 8px;
    fill: #fff;
}
.sidebar {
    width: 33px;
    display: flex;
    flex-direction: column;
    align-items: center;
    gap: 3px;
    border-bottom: 1px solid #b5b5b5;
}
.settings {
    width: 27px;
    height: 32px;
    border-bottom: 1px solid #ddd;
}
.settings svg {
    width: 12px;
    height: 12px;
}
.deck {
    width: 27px;
    height: 26px;
    border-radius: 3px;
}
.deck svg {
    width: 20px;
    height: 20px;
}
.deck.selected {
    border: 1px solid #b8b8b8;
    margin-bottom: 2px;
}

/* Status bar */
.statusbar {
    display: flex;
    align-items: center;
    height: 21px;
    background-color: #f0f0f0;
    border-top: 1px solid #c4c4c4;
}
.statusbar > span {
    height: 17px;
    line-height: 17px;
    border-right: 1px solid #c4c4c4;
}
.statusbar .st-percent {
    border-right: none;
    padding-left: 7px;
    width: 46px;
}
.st-sheet {
    flex: 228;
    padding-left: 10px;
}
.st-page {
    flex: 333;
}
.st-style {
    flex: 221;
    padding-left: 9px;
}
.st-lang {
    flex: 230;
    text-align: center;
}
.st-blank {
    flex: 57;
}
.st-icon {
    width: 26px;
    display: flex;
    align-items: center;
    justify-content: center;
}
.st-icon svg {
    width: 12px;
    height: 12px;
}
.st-sum {
    flex: 263;
    text-align: center;
}
.st-zoom {
    display: flex;
    align-items: center;
    justify-content: center;
    width: 121px;
}
.st-zoom button {
    width: 14px;
    font-size: 16px;
    color: #888;
}
.st-zoom input {
    appearance: none;
    width: 83px;
    height: 2px;
    margin: 0 2px;
    background-color: #999;
}
.st-zoom input::-webkit-slider-thumb {
    appearance: none;
    width: 8px;
    height: 8px;
    border: 1px solid #888;
    border-radius: 50%;
    background-color: #fff;
}

/* Taskbar */
.taskbar {
    display: flex;
    height: 42px;
    background-color: #04151b;
    color: #f0f0f0;
}
.app {
    width: 50px;
}
.app svg {
    width: 26px;
    height: 26px;
}
.app.running {
    width: 52px;
    margin: 0 1px 0 3px;
    background: linear-gradient(#8fe3f7, #8fe3f7) center bottom / 43px 3px no-repeat;
}
.app.focused {
    width: 51px;
    margin-left: 2px;
    background: linear-gradient(#8fe3f7, #8fe3f7) center bottom / 100% 3px no-repeat, #37464b;
}
.tray {
    display: flex;
    margin-left: auto;
    border-right: 1px solid #5b666a;
    margin-right: 4px;
}
.tray button {
    width: 25px;
}
.tray svg {
    width: 18px;
    height: 18px;
}
.tray .people {
    margin-right: 13px;
}
.tray .lang {
    width: 42px;
}
.tray .clock {
    width: 72px;
    line-height: 19px;
}
.tray .notify {
    width: 54px;
    position: relative;
}
.badge {
    position: absolute;
    right: 11px;
    bottom: 4px;
    width: 17px;
    height: 17px;
    border: 1px solid #777;
    border-radius: 50%;
    background-color: #2b3438;
    font-size: 11px;
    font-weight: 700;
    line-height: 15px;
    text-align: center;
}
```
FILE: script.js
```js
const columns = "ABCDEFGHIJKLMNOPQRSTUVW".split("");
const firstRow = 5;
const lastRow = 35;

// Free text cells. <u> marks a word the spell checker does not know.
const notes = {
    6: { A: "<u>Hipodrom:</u> <b><u>LJUTOMER</u></b>", D: "Datum: <b>13.9.2020</b>", H: "<u>Ura</u> <u>štarta</u>: <b>16:30</b>" },
    7: { A: "<u>Št.</u> <u>dirke</u>: <b>5</b>", D: "<u>Barva</u> <u>dirke</u>: <b><u>rumena</u></b>" },
    8: { A: "<u>Propozicije</u>: <b><u>Avtoštart</u> <u>za</u> 3 do 14-<u>letne</u> EU <u>kasače</u> z <u>zaslužkom</u> do 3.500 €</b>" },
    9: { A: "<u>Stanje</u> <u>steze</u>:" },
    28: { A: "<u>Opombe</u>:" },
    33: { A: "<u>Kazni</u>:" },
    34: { A: "<u>Št.</u> 8 Novak Franc - <u>oviranje</u> <u>št.</u> 2 <u>DIMITRIJ</u> VITA - <u>diskvalifikacija</u> + 40 € + 1 <u>TD</u> (27.09.2020)" },
    35: { A: "<u>Št.</u> 10 <u>Heric</u> Daniel - <u>nepravilno</u> <u>pariranje</u> - 40 €" }
};

const titles = ["M", "<u>Št</u>", "<u>Konj</u>", "<u>Klub</u>", "<u>Voznik</u>", "<u>Trener</u>", "<u>Lastnik</u>",
    "<u>Sk.</u> <u>Čas</u>", "<u>Čas/km</u>", "<u>Nagrada</u>", "<u>Galopi</u>", "Distance"];

// Results from row 12 on. A trailing | means the text goes on past its cell.
const results = [
    ["1", "3", "<u>SATCHMO</u> F|", "<u>KK</u> <u>Ljutomer</u>", "<u>Šadl</u> <u>Vito</u>", "<u>Sukič</u> <u>Dejan</u>", "<u>Sukič</u> <u>Dejan</u>", "02:03.20", "01:17.0", "405 €"],
    ["2", "5", "PELL", "<u>KK</u> <u>Ljutomer</u>", "<u>Kristl</u> <u>Primož</u>", "Novak Franc", "<u>Društvo</u> <u>za</u> k|", "02:04.60", "01:17.9", "207 €"],
    ["3", "12", "<u>FARANDOL</u>|", "<u>KK</u> <u>Komend</u>|", "Jan <u>Blaž</u>", "Jan <u>Miha</u>", "Jan <u>Gašper</u>", "02:04.76", "01:17.9", "135 €"],
    ["4", "1", "EMMA <u>DRE</u>|", "<u>KK</u> <u>Stožice</u> |", "<u>Hrovat</u> <u>Robe</u>|", "<u>Hrovat</u> <u>Robe</u>|", "<u>Hrovat</u> Petra|", "02:05.16", "01:18.2", "90 €"],
    ["5", "9", "<u>RIGILL</u>", "<u>KK</u> <u>Stožice</u> |", "<u>Medle</u> <u>Anja</u>", "<u>Medle</u> <u>Anja</u>", "<u>Medle</u> <u>Anja</u>", "02:05.48", "01:18.4", "63 €"],
    ["6", "13", "<u>VENERUSO</u>|", "<u>KK</u> <u>Šentjern</u>|", "<u>Simončič</u> <u>Ar</u>|", "<u>Simončič</u> <u>Ar</u>|", "<u>Dragovan</u> <u>Ne</u>|", "02:05.64", "01:18.5"],
    ["7", "2", "<u>DIMITRIJ</u> VI|", "<u>KK</u> <u>Posavje</u>|", "<u>Humek</u> Ivan", "<u>Humek</u> Ivan", "<u>Humek</u> <u>Lovr</u>|", "02:07.12", "01:19.5"],
    ["8", "11", "<u>DIZA</u> <u>DŽ</u>", "KD Sl. <u>Goric</u>|", "<u>Debelak</u> <u>Žar</u>|", "<u>Debelak</u> <u>Žar</u>|", "<u>Debelak</u> <u>Žar</u>|", "02:07.84", "01:19.9"],
    ["9", "7", "<u>ZARJA</u> JAM|", "<u>KK</u> <u>Stožice</u> |", "<u>Gorenc</u> <u>Mar</u>|", "<u>Gorenc</u> <u>Mar</u>|", "<u>Hlev</u> <u>Peški</u>", "02:08.00", "01:20.0"],
    ["<u>NC</u>", "4", "<u>DELIKATES</u>|", "<u>KK</u> <u>Šentjern</u>|", "Mars Martin", "<u>Simončič</u> <u>Ar</u>|", "<u>Dragovan</u> <u>Nejc</u>"],
    ["O", "6", "<u>BOAZ</u> NAS |", "<u>KK</u> <u>Šentjern</u>|", "<u>Zagorc</u> <u>Igna</u>|", "<u>Simončič</u> <u>Ar</u>|", "<u>Simončič</u> <u>Andrej</u>"],
    ["D", "8", "PATTY", "<u>KK</u> <u>Ljutomer</u>", "Novak Franc", "Novak Franc", "<u>Društvo</u> <u>za</u> <u>konje</u> in <u>ohranitev</u> <u>njih</u>"],
    ["G", "10", "LE <u>MANS</u>", "<u>KK</u> <u>Ljutomer</u>", "<u>Heric</u> Daniel", "<u>Heric</u> <u>Boštja</u>|", "KTD <u>Prelogi</u>"]
];

const footnote = "* <u>barva</u>, <u>spol</u>, <u>poreklo</u> in <u>lastnik</u> <u>kasača</u> so <u>opisani</u> v <u>podatkovni</u> <u>bazi</u> <u>KCS</u>";

function makeCell(row, col) {
    const td = document.createElement("td");
    let text = (notes[row] && notes[row][columns[col]]) || "";

    if (col < 12) {
        if (row >= 11 && row <= 25) td.classList.add("boxed", "ruled");
        if (row === 10 || row >= 27) td.classList.add("ruled");
        if ((row === 28 || row === 33) && col === 11) td.classList.add("boxed");

        if (row === 11) {
            td.classList.add("title");
            text = titles[col];
        } else if (row >= 12 && row <= 24) {
            td.classList.add("small");
            text = results[row - 12][col] || "";
            if (col === 11) text = "1.6";
            if (col < 2) td.classList.add("center");
            if (col > 6) td.classList.add("right");
            if (text.endsWith("|")) {
                text = text.slice(0, -1);
                td.classList.add("clip", "more");
            }
        } else if (row === 26 && col === 0) {
            td.classList.add("small");
            text = footnote;
        }
    }
    if (row === 24 && columns[col] === "M") td.classList.add("cursor");
    if (text) td.innerHTML = `<div>${text}</div>`;
    return td;
}

const cols = document.getElementById("cols");
cols.innerHTML = '<col class="col-rows">' + '<col class="col-cells">'.repeat(columns.length) + "<col>";

document.getElementById("head").innerHTML = "<tr><th></th>" +
    columns.map(c => `<th${c === "M" ? ' class="selected"' : ""}>${c}</th>`).join("") + "<th></th></tr>";

const body = document.getElementById("body");
for (let row = firstRow; row <= lastRow; row++) {
    const tr = document.createElement("tr");
    tr.innerHTML = `<th${row === 24 ? ' class="selected"' : ""}>${row}</th>`;

    // Lines for notes run over the whole width of the form
    const merged = (row >= 29 && row <= 32) || row >= 34;
    for (let col = 0; col < columns.length; col++) {
        const td = makeCell(row, col);
        if (merged && col === 0) {
            td.colSpan = 12;
            col = 11;
        }
        tr.appendChild(td);
    }
    tr.appendChild(document.createElement("td"));
    body.appendChild(tr);
}

// The next row is only just in view
const last = document.createElement("tr");
last.className = "ends";
last.innerHTML = "<th></th>" + "<td></td>".repeat(columns.length + 1);
body.appendChild(last);
```
